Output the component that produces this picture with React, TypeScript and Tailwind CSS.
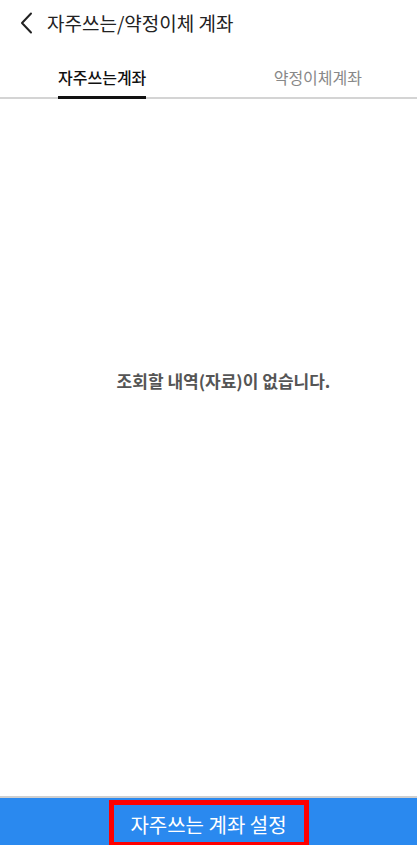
import React from "react";

export default function App() {
  const font = { fontFamily: '"Noto Sans CJK KR", "Noto Sans", sans-serif' };
  return (
    <div className="flex h-[845px] w-full flex-col bg-white" style={font}>
      <div className="flex h-[45px] items-center pl-[19px]">
        <svg width="16" height="22" viewBox="0 0 16 22" fill="none">
          <path d="M12 1.5 L3 11 L12 20.5" stroke="#222" strokeWidth="2" strokeLinecap="round" strokeLinejoin="round" />
        </svg>
        <span className="ml-[12px] text-[19px] leading-none text-[#222]">자주쓰는/약정이체 계좌</span>
      </div>
      <div className="relative flex h-[54px] border-b-2 border-[#d4d4d4]">
        <div className="flex flex-1 justify-start pl-[58px]">
          <div className="flex flex-col items-center justify-end">
            <span className="text-[16px] leading-none text-[#111] font-medium">자주쓰는계좌</span>
            <div className="mt-[11px] h-[3px] w-full bg-[#111] -mb-[2px]"></div>
          </div>
        </div>
        <div className="flex flex-1 justify-end pr-[55px]">
          <div className="flex flex-col items-center justify-end">
            <span className="text-[16px] leading-none text-[#888]">약정이체계좌</span>
            <div className="mt-[11px] h-[3px] w-full -mb-[2px]"></div>
          </div>
        </div>
      </div>
      <div className="flex flex-1 items-center justify-center pb-[134px] pl-[30px]">
        <span className="text-[17px] font-bold text-[#555]">조회할 내역(자료)이 없습니다.</span>
      </div>
      <div className="flex h-[49px] justify-center border-t-2 border-[#cfcfcf] bg-[#2a89ef] pt-[2px]">
        <div className="flex h-[47px] w-[200px] items-center justify-center border-[5px] border-[#ff0000] pt-[3px]">
          <span className="text-[20px] leading-none text-white">자주쓰는 계좌 설정</span>
        </div>
      </div>
    </div>
  );
}
